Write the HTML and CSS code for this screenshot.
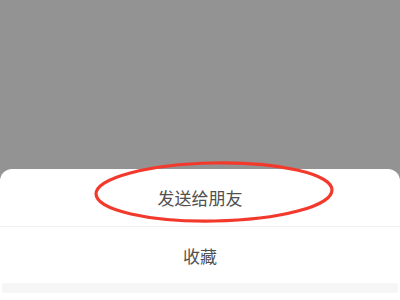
FILE: index.html
```html
<!DOCTYPE html>
<html>
<head>
<meta charset="utf-8">
<link rel="stylesheet" href="styles.css">
</head>
<body>
<div class="screen">
  <div class="mask"></div>
  <div class="sheet">
    <div class="item first">发送给朋友</div>
    <div class="item second">收藏</div>
    <div class="gap"></div>
    <div class="item cancel"></div>
  </div>
  <svg class="mark" width="400" height="300" viewBox="0 0 400 300">
    <ellipse cx="214" cy="192" rx="118" ry="29" fill="none" stroke="#f2392c" stroke-width="3.2" transform="rotate(-1 214 192)"/>
  </svg>
</div>
</body>
</html>
```
FILE: styles.css
```css
html, body {
  margin: 0;
  padding: 0;
}
body {
  width: 400px;
  height: 300px;
  overflow: hidden;
  font-family: "Noto Sans CJK SC", "Noto Sans", sans-serif;
}
.screen {
  position: relative;
  width: 400px;
  height: 300px;
  background: #939393;
  display: flex;
  flex-direction: column;
}
.mask {
  height: 169px;
  flex: none;
}
.sheet {
  flex: 1;
  background: #ffffff;
  border-radius: 12px 12px 0 0;
  display: flex;
  flex-direction: column;
}
.item {
  display: flex;
  align-items: center;
  justify-content: center;
  font-size: 17px;
  color: #505050;
}
.first {
  height: 57px;
  border-bottom: 1px solid #f0f0f0;
}
.second {
  height: 56px;
}
.gap {
  height: 10px;
  margin: 0 2px;
  background: #f6f6f6;
}
.cancel {
  flex: 1;
}
.mark {
  position: absolute;
  left: 0;
  top: 0;
}
```
